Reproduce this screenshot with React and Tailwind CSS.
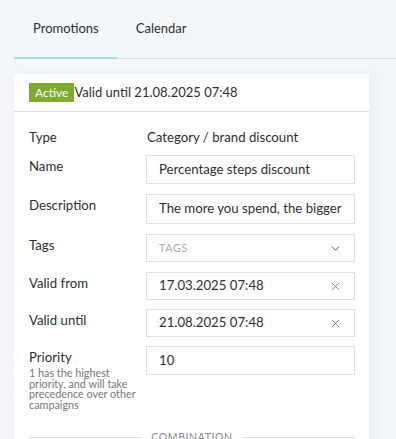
import { X, ChevronDown } from "lucide-react";

const font = { fontFamily: 'Lato, "Noto Sans", sans-serif' };

function Field({ label, children, help, className = "" }) {
  return (
    <div className={"flex items-start " + className}>
      <div className="w-[117px] shrink-0">
        <div className="text-[13.2px] leading-[18px] text-[#2e2e2e] pt-[2px]">{label}</div>
        {help && (
          <div className="w-[112px] text-[10.8px] leading-[10.5px] text-[#777] mt-[2px]">
            {help}
          </div>
        )}
      </div>
      <div className="flex-1 min-w-0">{children}</div>
    </div>
  );
}

function Input({ value, icon, placeholder, h = "h-[29px]" }) {
  return (
    <div
      className={
        "flex items-center border border-[#dfe1e8] pl-[12px] pr-[12px] " + h
      }
    >
      <div className="flex-1 min-w-0 overflow-hidden whitespace-nowrap text-[13.2px] text-[#2e2e2e]">
        {placeholder ? (
          <span className="text-[10.5px] tracking-[0.8px] text-[#a5a9b0]">{placeholder}</span>
        ) : (
          value
        )}
      </div>
      {icon === "x" && <X size={13} strokeWidth={1.6} className="text-[#777] shrink-0" />}
      {icon === "chevron" && (
        <ChevronDown size={13} strokeWidth={1.8} className="text-[#3d4f5c] shrink-0" />
      )}
    </div>
  );
}

export default function App() {
  return (
    <div className="w-[396px] h-[439px] overflow-hidden bg-[#f4f7f9]" style={font}>
      <div className="pl-[14px] pt-0">
        <div className="flex border-b border-[#dbdee1] h-[59px]">
          <div className="px-[19px] flex items-center border-b-2 border-[#a9dbe2] -mb-px text-[13px] text-[#2e2e2e]">
            Promotions
          </div>
          <div className="px-[18px] flex items-center text-[13px] text-[#2e2e2e]">Calendar</div>
        </div>

        <div className="mt-[15px] w-[355px] bg-white shadow-[6px_0_14px_rgba(0,0,0,0.04)]">
          <div className="h-[38px] flex items-center px-[15px] border-b border-[#dcdcdc]">
            <span className="h-[19px] px-[6px] flex items-center bg-[#7cab2f] text-white text-[12px]">
              Active
            </span>
            <span className="text-[13px] text-[#2e2e2e]">Valid until 21.08.2025 07:48</span>
          </div>

          <div className="pl-[15px] pr-[14px] pt-[14px] pb-[20px]">
            <Field label="Type">
              <div className="text-[13.2px] leading-[18px] text-[#2e2e2e] pt-[2px] pl-[1px]">
                Category / brand discount
              </div>
            </Field>
            <Field label="Name" className="mt-[9px]">
              <Input value="Percentage steps discount" />
            </Field>
            <Field label="Description" className="mt-[10px]">
              <Input value="The more you spend, the bigger the discount" h="h-[30px]" />
            </Field>
            <Field label="Tags" className="mt-[10px]">
              <Input placeholder="TAGS" icon="chevron" h="h-[28px]" />
            </Field>
            <Field label="Valid from" className="mt-[10px]">
              <Input value="17.03.2025 07:48" icon="x" h="h-[28px]" />
            </Field>
            <Field label="Valid until" className="mt-[9px]">
              <Input value="21.08.2025 07:48" icon="x" h="h-[28px]" />
            </Field>
            <Field
              label="Priority"
              className="mt-[9px]"
              help="1 has the highest priority, and will take precedence over other campaigns"
            >
              <Input value="10" />
            </Field>

            <div className="flex items-center mt-[20px]">
              <div className="flex-1 border-t border-[#dcdcdc]" />
              <div className="px-[9px] text-[10.5px] tracking-[0.6px] text-[#888]">COMBINATION</div>
              <div className="flex-1 border-t border-[#dcdcdc]" />
            </div>
          </div>
        </div>
      </div>
    </div>
  );
}
